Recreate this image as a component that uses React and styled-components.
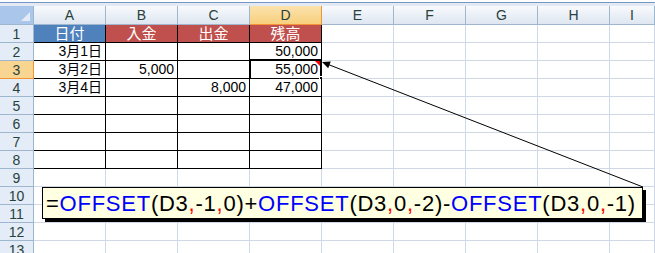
import React from 'react';
import styled, { createGlobalStyle } from 'styled-components';

const GlobalStyle = createGlobalStyle`
  html, body {
    margin: 0;
    padding: 0;
    background: #fff;
    overflow: hidden;
  }
  body {
    font-family: "Liberation Sans", "Noto Sans CJK JP", sans-serif;
  }
`;

const Page = styled.div`
  position: relative;
  width: 655px;
  height: 253px;
  overflow: hidden;
`;

const FormulaEdge = styled.div`
  height: 6px;
  background: linear-gradient(#fff 0, #fff 2px, #7396c4 2px, #7396c4 3px, #e3eaf4 3px);
`;

const Sheet = styled.div`
  display: grid;
  grid-template-columns: 34px repeat(8, 72px) 45px;
  grid-template-rows: 19px;
  grid-auto-rows: 18px;
`;

const Corner = styled.div`
  box-sizing: border-box;
  background: #aac6ea;
  border-right: 1px solid #9eb6ce;
  border-bottom: 1px solid #9eb6ce;
  display: flex;
  align-items: flex-end;
  justify-content: flex-end;
  padding: 0 3px 3px 0;
`;

const ColHead = styled.div`
  box-sizing: border-box;
  border-right: 1px solid ${p => (p.$active ? '#f29436' : '#9eb6ce')};
  border-bottom: 1px solid ${p => (p.$active ? '#f29436' : '#9eb6ce')};
  background: ${p =>
    p.$active
      ? 'linear-gradient(#fbe3ad, #f8cf7d)'
      : 'linear-gradient(#f8fafd, #dee6f0)'};
  color: #27413e;
  font-size: 14px;
  display: flex;
  align-items: center;
  justify-content: center;
`;

const RowHead = styled.div`
  box-sizing: border-box;
  border-right: 1px solid ${p => (p.$active ? '#f29436' : '#9eb6ce')};
  border-bottom: 1px solid ${p => (p.$active ? '#f29436' : '#9eb6ce')};
  background: ${p => (p.$active ? '#f8d590' : '#e4ecf7')};
  color: #27413e;
  font-size: 14px;
  display: flex;
  align-items: center;
  justify-content: center;
`;

const fills = {
  blue: '#4f81bd',
  red: '#c0504d',
};

const Cell = styled.div`
  box-sizing: border-box;
  position: relative;
  border-right: 1px solid ${p => (p.$boxed ? '#000' : '#d0d7e5')};
  border-bottom: 1px solid ${p => (p.$boxed ? '#000' : '#d0d7e5')};
  background: ${p => fills[p.$fill] || '#fff'};
  color: ${p => (p.$fill ? '#fff' : '#000')};
  text-align: ${p => (p.$fill ? 'center' : 'right')};
  font-size: ${p => (p.$fill ? '15px' : '14px')};
  line-height: 17px;
  padding: 0 3px;
  white-space: nowrap;
`;

const Selection = styled.div`
  position: absolute;
  top: -2px;
  left: -1px;
  right: -1px;
  bottom: -2px;
  border: 2px solid #000;
  pointer-events: none;
`;

const FillHandle = styled.div`
  position: absolute;
  right: -4px;
  bottom: -4px;
  width: 4px;
  height: 4px;
  background: #000;
  border: 1px solid #fff;
`;

const NoteMark = styled.div`
  position: absolute;
  top: 0;
  right: 1px;
  width: 0;
  height: 0;
  border-top: 5px solid #ff0000;
  border-left: 5px solid transparent;
`;

const Callout = styled.div`
  position: absolute;
  left: 42px;
  top: 187px;
  width: 601px;
  height: 32px;
  box-sizing: border-box;
  border: 1px solid #000;
  background: #ffffe1;
  box-shadow: 3px 3px 0 #000;
  display: flex;
  align-items: center;
  padding: 1px 0 0 3px;
  font-size: 22px;
  letter-spacing: 0.75px;
  color: #000;
  white-space: nowrap;
`;

const Fn = styled.span`
  color: #0000ff;
`;

const Sep = styled.span`
  color: #ff0000;
`;

const Pointer = styled.svg`
  position: absolute;
  left: 0;
  top: 0;
  pointer-events: none;
`;

const columns = ['A', 'B', 'C', 'D', 'E', 'F', 'G', 'H', 'I'];

const rows = [
  [
    { t: '日付', fill: 'blue' },
    { t: '入金', fill: 'red' },
    { t: '出金', fill: 'red' },
    { t: '残高', fill: 'red' },
  ],
  [{ t: '3月1日' }, { t: '' }, { t: '' }, { t: '50,000' }],
  [{ t: '3月2日' }, { t: '5,000' }, { t: '' }, { t: '55,000', selected: true }],
  [{ t: '3月4日' }, { t: '' }, { t: '8,000' }, { t: '47,000' }],
];

const TABLE_ROWS = 8;
const ROW_COUNT = 13;

const Arg = ({ parts }) =>
  parts.map((p, i) => (i % 2 === 1 ? <Sep key={i}>,</Sep> : <span key={i}>{p}</span>));

const App = () => {
  const renderRow = r => {
    const data = rows[r - 1] || [];
    return (
      <React.Fragment key={r}>
        <RowHead $active={r === 3}>{r}</RowHead>
        {columns.map((c, ci) => {
          const item = data[ci] || {};
          const boxed = r <= TABLE_ROWS && ci < 4;
          return (
            <Cell key={c} $boxed={boxed} $fill={item.fill}>
              {item.t}
              {item.selected && (
                <>
                  <NoteMark />
                  <Selection />
                  <FillHandle />
                </>
              )}
            </Cell>
          );
        })}
      </React.Fragment>
    );
  };

  return (
    <Page>
      <GlobalStyle />
      <FormulaEdge />
      <Sheet>
        <Corner>
          <svg width="9" height="9" viewBox="0 0 9 9">
            <polygon points="9,0 9,9 0,9" fill="#e2ebf6" />
          </svg>
        </Corner>
        {columns.map(c => (
          <ColHead key={c} $active={c === 'D'}>{c}</ColHead>
        ))}
        {Array.from({ length: ROW_COUNT }, (_, i) => renderRow(i + 1))}
      </Sheet>

      <Pointer width="655" height="253">
        <line x1="643" y1="187" x2="327" y2="64" stroke="#000" strokeWidth="1" />
        <polygon points="322,62 328.2,68.2 330.8,61.6" fill="#000" />
      </Pointer>

      <Callout>
        <span>=</span>
        <Fn>OFFSET</Fn>
        <span>(</span>
        <Arg parts={['D3', ',', '-1', ',', '0']} />
        <span>)+</span>
        <Fn>OFFSET</Fn>
        <span>(</span>
        <Arg parts={['D3', ',', '0', ',', '-2']} />
        <span>)-</span>
        <Fn>OFFSET</Fn>
        <span>(</span>
        <Arg parts={['D3', ',', '0', ',', '-1']} />
        <span>)</span>
      </Callout>
    </Page>
  );
};

export default App;
